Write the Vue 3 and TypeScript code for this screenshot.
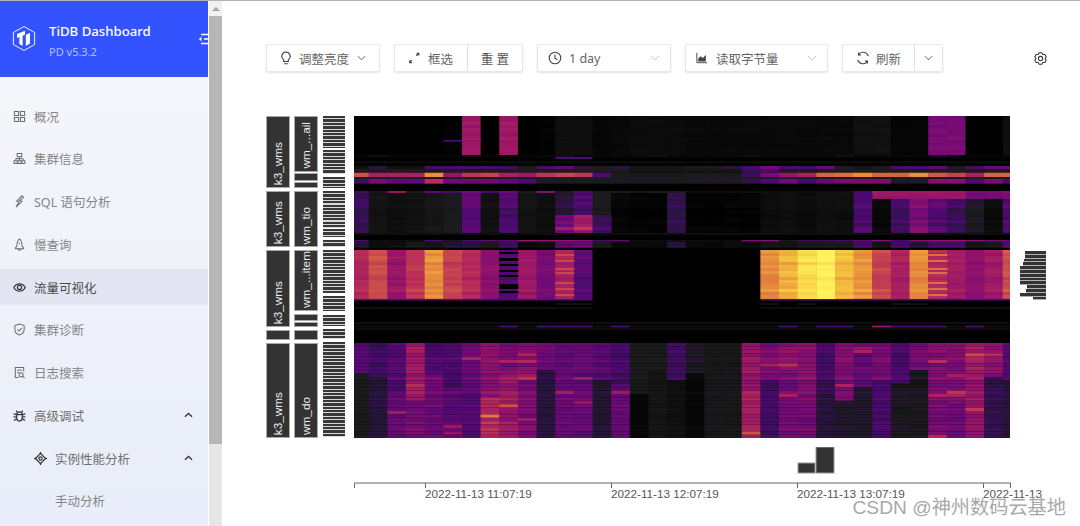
<script setup lang="ts">
import { onMounted, ref } from 'vue'

interface NavItem { label: string; icon: string[]; active?: boolean; sub?: boolean; leaf?: boolean; caret?: boolean }

const icons: Record<string, string[]> = {
  grid: ['M1.5 1.5h4.5v4.5H1.5z', 'M8 1.5h4.5v4.5H8z', 'M1.5 8h4.5v4.5H1.5z', 'M8 8h4.5v4.5H8z'],
  cluster: ['M4.5 1.5h5v3.5h-5z', 'M7 5v2', 'M3 7.2h8', 'M3 7.2v2', 'M7 7.2v2', 'M11 7.2v2', 'M1.2 9.5h3.4v3H1.2z', 'M5.3 9.5h3.4v3H5.3z', 'M9.4 9.5h3.4v3H9.4z'],
  bolt: ['M9.5 1 4 6.8l2.6.7L3.2 13l6.6-6.2-2.6-.8L11.5 2.5z'],
  rocket: ['M7 1C4.8 2.6 4.2 5 4.2 8.6L2.6 10.6v1h8.8v-1L9.8 8.6C9.8 5 9.2 2.6 7 1z', 'M5.5 11.6c0 1 .7 1.6 1.5 1.6s1.500-.6 1.500-1.600', 'M7 5v1.500'],
  eye: ['M.8 7C2.300 4.300 4.400 3 7 3s4.700 1.300 6.200 4C11.700 9.700 9.600 11 7 11S2.300 9.700.8 7z', 'M4.800 7a2.200 2.200 0 1 0 4.400 0a2.200 2.200 0 1 0-4.400 0z'],
  shield: ['M7 1 2 2.800v4.200c0 3 2.200 5 5 6 2.800-1 5-3 5-6V2.800z', 'M4.800 7 6.500 8.600 9.300 5.600'],
  log: ['M11.500 6V1.500h-9v11H6', 'M4.500 4.500h5', 'M4.500 7h2', 'M6.500 9.500a2.200 2.200 0 1 0 4.400 0a2.200 2.200 0 1 0-4.400 0z', 'M10.300 11 12.500 13'],
  bug: ['M4 6.500C4 4.500 5.200 3.200 7 3.200s3 1.300 3 3.300v3C10 11.500 8.800 13 7 13s-3-1.500-3-3.500z', 'M4.700 3.800 3.500 1.800', 'M9.300 3.800 10.500 1.800', 'M4 6h6', 'M.8 5l3.200 1.500', 'M13.200 5 10 6.500', 'M.6 8.500H4', 'M13.400 8.500H10', 'M1 12.500l3-2', 'M13 12.500l-3-2'],
  aim: ['M7 1.500 12.500 7 7 12.500 1.500 7z', 'M5.200 7a1.800 1.800 0 1 0 3.600 0a1.800 1.800 0 1 0-3.600 0z', 'M7 0v2.500', 'M7 11.500V14', 'M0 7h2.500', 'M11.500 7H14'],
}

const nav: NavItem[] = [
  { label: '概况', icon: icons.grid },
  { label: '集群信息', icon: icons.cluster },
  { label: 'SQL 语句分析', icon: icons.bolt },
  { label: '慢查询', icon: icons.rocket },
  { label: '流量可视化', icon: icons.eye, active: true },
  { label: '集群诊断', icon: icons.shield },
  { label: '日志搜索', icon: icons.log },
  { label: '高级调试', icon: icons.bug, caret: true },
  { label: '实例性能分析', icon: icons.aim, sub: true, caret: true },
  { label: '手动分析', icon: [], leaf: true },
]

// six-lobed settings cog, outlined
const gearPath = (() => {
  const pts: string[] = []
  for (let i = 0; i < 6; i++) {
    const a = (Math.PI / 3) * i - Math.PI / 2
    const p = (r: number, d: number) => {
      const t = a + d
      return `${(7 + r * Math.cos(t)).toFixed(2)} ${(7 + r * Math.sin(t)).toFixed(2)}`
    }
    pts.push(`${i ? 'L' : 'M'}${p(5, -0.5)}`, `L${p(6.4, -0.22)}`, `L${p(6.4, 0.22)}`, `L${p(5, 0.5)}`)
  }
  return pts.join(' ') + ' Z'
})()

interface Block { h: number; mt: number; text?: string }
const dbCol: Block[] = [
  { h: 72, mt: 0, text: 'k3_wms' }, { h: 56, mt: 3, text: 'k3_wms' }, { h: 77, mt: 3, text: 'k3_wms' },
  { h: 10, mt: 3 }, { h: 95, mt: 3, text: 'k3_wms' },
]
const tableCol: Block[] = [
  { h: 56, mt: 0, text: 'wm_...ail' }, { h: 8, mt: 1 }, { h: 6, mt: 1 }, { h: 56, mt: 3, text: 'wm_tio' },
  { h: 61, mt: 3, text: 'wm_...item' }, { h: 7, mt: 3 }, { h: 5, mt: 1 }, { h: 10, mt: 3 }, { h: 95, mt: 3, text: 'wm_do' },
]
const ladderCol: Block[] = [
  { h: 32, mt: 0 }, { h: 24, mt: 2 }, { h: 11, mt: 3 }, { h: 37, mt: 3 }, { h: 8, mt: 1 }, { h: 7, mt: 3 },
  { h: 43, mt: 3 }, { h: 15, mt: 3 }, { h: 11, mt: 4 }, { h: 10, mt: 3 }, { h: 95, mt: 3 },
]
const histogram = [21, 21, 22, 23, 26, 26, 26, 26, 26, 19, 20, 26, 13]
const ticks = [
  { x: 71, label: '2022-11-13 11:07:19' },
  { x: 257, label: '2022-11-13 12:07:19' },
  { x: 443, label: '2022-11-13 13:07:19' },
  { x: 629, label: '2022-11-13' },
]

const canvas = ref<HTMLCanvasElement | null>(null)

const stops: [number, number[]][] = [
  [0, [0, 0, 0]], [0.05, [14, 14, 14]], [0.1, [27, 26, 28]], [0.2, [40, 20, 62]], [0.3, [74, 10, 112]],
  [0.4, [112, 10, 118]], [0.5, [150, 20, 104]], [0.6, [184, 44, 88]], [0.7, [208, 90, 72]],
  [0.8, [232, 142, 60]], [0.9, [245, 200, 64]], [1, [255, 242, 92]],
]
function colour(v: number): string {
  const t = Math.max(0, Math.min(1, v))
  for (let i = 1; i < stops.length; i++) {
    if (t <= stops[i][0]) {
      const [a, ca] = stops[i - 1]
      const [b, cb] = stops[i]
      const k = (t - a) / (b - a)
      return `rgb(${ca.map((c, j) => Math.round(c + (cb[j] - c) * k)).join(',')})`
    }
  }
  return 'rgb(255,242,92)'
}

let seed = 7
function rnd(): number {
  seed = (seed * 16807) % 2147483647
  return seed / 2147483647
}

function draw(ctx: CanvasRenderingContext2D) {
  const Y0 = 116
  const colX = (c: number) => (c === 0 ? 0 : 14.7 + (c - 1) * 18.65)
  const band = (y0: number, y1: number, vals: number[], amp = 0, rowH = 3) => {
    for (let y = y0; y < y1; y += rowH) {
      const rowNoise = (rnd() - 0.5) * amp
      vals.forEach((v, c) => {
        if (v < 0) return
        const jitter = rowNoise + (rnd() - 0.5) * amp * 0.9
        const k = v < 0.12 ? 0.2 : 1
        ctx.fillStyle = colour(v === 0 ? 0 : v + jitter * k)
        ctx.fillRect(colX(c), y - Y0, colX(c + 1) - colX(c) + 0.5, Math.min(rowH, y1 - y))
      })
    }
  }
  const fill = (v: number) => new Array(36).fill(v) as number[]
  const only = (m: Record<number, number>) => fill(-1).map((_, i) => (i in m ? m[i] : -1))

  ctx.fillStyle = '#000'
  ctx.fillRect(0, 0, 656, 322)

  band(116, 155, [0, 0, 0, 0, 0, .01, .52, 0, .52, 0, .01, .05, .05, .02, .03, .04, .04, .04, .03, .03, .03, .03, .03, .03, .03, .03, .03, .06, .06, .02, .02, .42, .42, 0, 0, .05], .04, 3)
  band(140, 141.6, only({ 5: .32, 6: .5 }))
  band(155, 157, fill(.03).map((v, i) => (i % 5 === 1 ? .06 : v)))
  band(157, 159, fill(0).map((_, i) => (i === 11 || i === 12 ? .3 : .01)))
  band(161, 163, fill(.04))
  band(163, 166, fill(.01))
  band(166, 169, [.06, .2, .06, .06, .3, .3, .3, .3, .28, .1, .3, .35, .2, .12, .2, .08, .08, .08, .1, .1, .2, .3, .42, .3, .28, .38, .12, .08, .1, .3, .3, .35, .12, .28, .38, .38])
  band(169, 172.7, [.1, .12, .1, .1, .12, .12, .12, .1, .1, .1, .12, .12, .12, .1, .1, .08, .08, .08, .08, .08, .08, .25, .3, .1, .1, .1, .1, .1, .1, .1, .1, .1, .1, .1, .1, .1])
  band(172.7, 177, [.68, .55, .55, .56, .8, .5, .62, .65, .55, .52, .62, .66, .62, .3, .1, .09, .09, .09, .1, .1, .1, .25, .42, .5, .55, .72, .74, .8, .72, .72, .8, .7, .65, .55, .72, .72], 0, 5)
  band(177, 179, fill(.12))
  band(179, 183.7, [.25, .42, .35, .35, .6, .4, .38, .4, .36, .3, .12, .1, .1, .1, .1, .1, .1, .1, .1, .12, .12, .22, .3, .4, .28, .38, .42, .42, .42, .12, .12, .45, .45, .3, .42, .3], 0, 5)
  // wm_tio group
  band(191, 193, [.25, .08, .5, .1, .35, .3, .42, .3, .4, .1, .45, .1, .3, .1, .1, .08, .1, .12, .05, .05, .05, .06, .06, .06, .06, .06, .06, .28, .52, .52, .52, .52, .52, .42, .42, .45])
  band(193, 233, [.24, .07, .05, .06, .08, .1, .34, .06, .3, .07, .05, .18, .3, .1, .02, .01, .01, .22, .01, .01, .01, .01, .04, .05, .04, .05, .05, .3, .03, .26, .42, .32, .26, .12, .04, .3], .07, 3)
  band(193, 199, only({ 28: .52, 29: .52, 30: .52, 31: .52, 32: .52, 33: .42, 34: .42, 35: .45 }), .04, 3)
  band(215, 233, only({ 11: .46, 12: .56, 13: .3 }), .12, 3)
  band(233, 235, fill(.05))
  band(240, 241.7, [.3, .05, .05, .05, .3, .1, .3, .35, .35, .5, .5, .5, .45, .3, .35, .05, .05, .05, .05, .05, .05, .42, .45, .1, .28, .28, .3, .38, .45, .3, .45, .5, .5, .45, .42, .4])
  band(241.7, 248, [.2, .05, .06, .1, .08, .2, .22, .1, .3, .04, .05, .36, .4, .1, .04, .04, .04, .22, .03, .03, .05, .04, .08, .08, .1, .1, .1, .3, .08, .3, .2, .3, .3, .08, .1, .34], .04, 3)
  // bright group
  band(250, 300, [.58, .67, .5, .62, .8, .65, .58, .47, .32, .52, .42, .56, .34, 0, 0, 0, 0, 0, 0, 0, 0, 0, .79, .86, .95, 1, .88, .81, .65, .55, .79, .58, .53, .47, .52, .68], .05, 3)
  for (const [a, b] of [[252, 254], [258, 261], [264, 266], [270, 272], [275, 277], [284, 289], [291, 293]]) {
    band(a, b, only({ 8: 0 }), 0, 5)
  }
  for (const [a, b] of [[254, 256], [260, 262], [268, 270], [272, 274], [282, 284], [288, 290], [294, 296]]) {
    band(a, b, only({ 11: .66, 31: .74 }), 0, 5)
  }
  band(299, 300.5, fill(0).map((_, i) => (i < 13 || i > 21 ? .34 : 0)), 0, 3)
  // quiet group
  band(303, 305, fill(0).map((_, i) => ([11, 12, 22, 24, 29, 30].includes(i) ? .05 : 0)))
  band(307, 309, fill(.05).map((v, i) => (i > 12 && i < 22 ? .01 : v)))
  band(322, 324, fill(.05))
  band(325.5, 327.5, fill(.05).map((_, i) => ([8, 10, 11, 12, 14, 23, 25, 26, 28, 29, 30, 31, 33].includes(i) ? (i === 28 ? .5 : .3) : .05)))
  band(328, 330, fill(.04))
  // bottom group: every column turns from its upper to its lower level at its own height
  const upper = [.33, .27, .33, .52, .31, .3, .38, .48, .43, .44, .4, .36, .37, .33, .28, .1, .1, .27, .12, .09, .09, .5, .42, .46, .46, .28, .44, .38, .42, .3, .42, .44, .44, .52, .48, .33]
  const lower = [.1, .2, .38, .42, .4, .36, .34, .6, .52, .43, .2, .38, .38, .18, .38, .03, .08, .06, .03, .09, .09, .55, .28, .42, .42, .2, .15, .15, .3, .13, .12, .42, .4, .5, .24, .2]
  const cut = upper.map(() => 368 + rnd() * 34)
  for (let y = 343; y < 438; y += 3.4) {
    const rowNoise = (rnd() - 0.5) * 0.07
    upper.forEach((u, c) => {
      const base = y < cut[c] ? u : lower[c]
      const flare = base > 0.35 && rnd() < 0.07 ? 0.14 : 0
      const k = base < 0.12 ? 0.15 : 1
      ctx.fillStyle = colour(base + flare + (rowNoise + (rnd() - 0.5) * 0.06) * k)
      ctx.fillRect(colX(c), y - Y0, colX(c + 1) - colX(c) + 0.5, 3.4)
    })
  }
}

onMounted(() => {
  const ctx = canvas.value?.getContext('2d')
  if (ctx) draw(ctx)
})
</script>

<template>
  <div class="page">
    <aside class="sidebar">
      <header class="brand">
        <svg class="logo" viewBox="0 0 26 28" width="24" height="27">
          <path class="logo-hex" d="M13 1 24.500 7.500v13L13 27 1.500 20.500v-13z" />
          <path class="logo-mark" d="M5.500 9 14 5.500v4.500l-2.500 1V22L8 20v-7.500L5.500 13.500z" />
          <path class="logo-mark" d="M15 10l4.500-2v11.500L15 22z" />
        </svg>
        <div class="brand-text">
          <div class="brand-name">TiDB Dashboard</div>
          <div class="brand-version">PD v5.3.2</div>
        </div>
        <svg class="collapse" viewBox="0 0 14 12" width="14" height="12">
          <path d="M3 1.500h11M6 6h8M3 10.500h11" />
          <path class="collapse-tip" d="M3.500 3.800 0.800 6l2.700 2.200z" />
        </svg>
      </header>
      <nav class="menu">
        <div
          v-for="item in nav"
          :key="item.label"
          class="menu-item"
          :class="{ active: item.active, sub: item.sub, leaf: item.leaf, strong: item.caret }"
        >
          <svg v-if="item.icon.length" class="menu-icon" viewBox="0 0 14 14" width="13" height="13">
            <path v-for="d in item.icon" :key="d" :d="d" />
          </svg>
          <span class="menu-label">{{ item.label }}</span>
          <svg v-if="item.caret" class="caret" viewBox="0 0 10 6" width="9" height="6">
            <path d="M1 5 5 1.300 9 5" />
          </svg>
        </div>
      </nav>
    </aside>

    <div class="scrollbar">
      <div class="scroll-up"><i></i></div>
      <div class="scroll-thumb"></div>
    </div>

    <main class="main">
      <div class="toolbar">
        <button class="btn w-bright">
          <svg class="ico" viewBox="0 0 14 14" width="14" height="14"><path d="M7 1a4.200 4.200 0 0 0-2.300 7.700V10.500h4.600V8.700A4.200 4.200 0 0 0 7 1zM5.200 12.800h3.600" /></svg>
          <span>调整亮度</span>
          <svg class="chev" viewBox="0 0 10 6" width="9" height="6"><path d="M1 1l4 4 4-4" /></svg>
        </button>
        <div class="group">
          <button class="btn seg w-select">
            <svg class="ico thick" viewBox="0 0 14 14" width="12" height="12"><path d="M1.500 12.500 4.500 9.500M9.500 4.500 12.500 1.500M2 10v2.500h2.500M10 1.500h2.500V4" /></svg>
            <span>框选</span>
          </button>
          <button class="btn seg w-reset"><span class="spaced">重 置</span></button>
        </div>
        <button class="btn w-range">
          <svg class="ico" viewBox="0 0 14 14" width="14" height="14"><circle cx="7" cy="7" r="5.800" /><path d="M7 3.500V7.300l2.500 1.500" /></svg>
          <span>1 day</span>
          <svg class="chev pale push" viewBox="0 0 10 6" width="10" height="6"><path d="M1 1l4 4 4-4" /></svg>
        </button>
        <button class="btn w-metric">
          <svg class="ico" viewBox="0 0 14 14" width="12" height="12"><path d="M1 1v11.500h12" /><path class="solid" d="M2.500 11V8l3-3 2.500 2 3.500-3.500V11z" /></svg>
          <span class="metric-label">读取字节量</span>
          <svg class="chev pale push" viewBox="0 0 10 6" width="10" height="6"><path d="M1 1l4 4 4-4" /></svg>
        </button>
        <div class="group">
          <button class="btn seg w-refresh">
            <svg class="ico" viewBox="0 0 14 14" width="14" height="14"><path d="M12.300 5A5.600 5.600 0 0 0 2.500 3.500M1.700 9a5.600 5.600 0 0 0 9.800 1.500" /><path class="solid" d="M2 1v3.500h3.500zM12 13V9.500H8.500z" /></svg>
            <span>刷新</span>
          </button>
          <button class="btn seg w-more">
            <svg class="chev" viewBox="0 0 10 6" width="9" height="6"><path d="M1 1l4 4 4-4" /></svg>
          </button>
        </div>
        <svg class="gear" viewBox="0 0 14 14" width="13" height="13">
          <path :d="gearPath" />
          <circle cx="7" cy="7" r="2.300" />
        </svg>
      </div>

      <section class="heat-row">
        <div class="col col-db">
          <div v-for="(b, i) in dbCol" :key="i" class="tag" :style="{ height: b.h + 'px', marginTop: b.mt + 'px' }">
            <span v-if="b.text">{{ b.text }}</span>
          </div>
        </div>
        <div class="col col-table">
          <div v-for="(b, i) in tableCol" :key="i" class="tag" :style="{ height: b.h + 'px', marginTop: b.mt + 'px' }">
            <span v-if="b.text">{{ b.text }}</span>
          </div>
        </div>
        <div class="col col-ladder">
          <div v-for="(b, i) in ladderCol" :key="i" class="ladder" :style="{ height: b.h + 'px', marginTop: b.mt + 'px' }"></div>
        </div>
        <div class="canvas-wrap">
          <canvas ref="canvas" class="heat" width="656" height="322"></canvas>
        </div>
        <div class="hist">
          <div v-for="(w, i) in histogram" :key="i" class="hist-bar" :style="{ width: w + 'px' }"></div>
        </div>
      </section>

      <svg class="timeline" width="714" height="66" viewBox="0 0 714 66">
        <rect class="bar" x="444" y="16" width="17" height="10" />
        <rect class="bar" x="462" y="0" width="18" height="26" />
        <path class="axis" d="M0.500 41V36H656.500V41" />
        <path v-for="t in ticks" :key="t.x" class="axis" :d="`M${t.x + 0.5} 36v5`" />
        <text v-for="t in ticks" :key="t.label" class="tick" :x="t.x" y="51">{{ t.label }}</text>
      </svg>
    </main>
    <div class="watermark">CSDN @神州数码云基地</div>
  </div>
</template>

<style>
html, body { margin: 0; height: 526px; overflow: hidden; background: #fff; }
</style>

<style scoped>
.page {
  position: relative;
  display: flex;
  width: 1080px;
  height: 525px;
  border-top: 1px solid #b4b4b4;
  font-family: "Noto Sans", "Noto Sans CJK SC", sans-serif;
  overflow: hidden;
}
.sidebar {
  width: 208px;
  flex: none;
  overflow: hidden;
  background: linear-gradient(180deg, #f7f8fc 0%, #e9edf9 100%);
}
.brand {
  height: 76px;
  display: flex;
  align-items: center;
  padding-left: 12px;
  background: #3353ff;
  color: #fff;
  box-sizing: border-box;
  position: relative;
}
.logo { flex: none; margin-top: -1px; }
.logo-hex { fill: none; stroke: #fff; stroke-width: 1; }
.logo-mark { fill: #fff; }
.brand-text { margin-left: 13px; margin-top: 5px; }
.brand-name { font-size: 13.200px; line-height: 20px; color: #fff; font-weight: 500; white-space: nowrap; }
.brand-version { font-size: 11px; line-height: 22px; color: #b3c0ff; }
.collapse { position: absolute; left: 198px; top: 32px; fill: none; stroke: #fff; stroke-width: 1.400; }
.collapse-tip { fill: #fff; stroke: none; }

.menu { padding-top: 21px; display: flex; flex-direction: column; gap: 6.780px; }
.menu-item {
  height: 36px;
  display: flex;
  align-items: center;
  padding-left: 13px;
  padding-right: 15px;
  font-size: 12.500px;
  color: #858585;
}
.menu-item.active { background: #e3e6f2; color: #4a4a4a; }
.menu-item.strong { color: #6e6e6e; }
.menu-item.sub { padding-left: 34px; }
.menu-item.leaf { padding-left: 55px; }
.menu-icon { flex: none; margin-right: 8px; fill: none; stroke: #6a6a6a; stroke-width: 1.100; }
.active .menu-icon, .strong .menu-icon { stroke: #333; stroke-width: 1.300; }
.menu-label { white-space: nowrap; flex: 1; }
.caret { flex: none; fill: none; stroke: #333; stroke-width: 1.400; }

.scrollbar {
  width: 13px;
  margin-left: 1px;
  flex: none;
  background: #e6e6e6;
  display: flex;
  flex-direction: column;
}
.scroll-up { height: 15px; background: #f1f1f1; display: flex; justify-content: center; padding-top: 6px; box-sizing: border-box; }
.scroll-up i { width: 0; height: 0; border: 4px solid transparent; border-top: 0; border-bottom: 4px solid #a3a3a3; }
.scroll-thumb { height: 428px; background: #b6b6b6; }

.main {
  flex: 1;
  min-width: 0;
  padding: 43px 32px 0 44px;
  box-sizing: border-box;
}
.toolbar { display: flex; align-items: center; gap: 14px; height: 28px; }
.group { display: flex; box-shadow: 0 1px 2px rgba(0, 0, 0, .12); border-radius: 2px; }
.btn {
  height: 28px;
  display: flex;
  align-items: center;
  gap: 7px;
  padding: 0 12px;
  box-sizing: border-box;
  background: #fff;
  border: 1px solid #e8e8e8;
  border-radius: 2px;
  box-shadow: 0 1px 2px rgba(0, 0, 0, .12);
  font: inherit;
  font-size: 12.500px;
  color: #666;
  white-space: nowrap;
}
.btn.seg { box-shadow: none; }
.seg + .seg { margin-left: -1px; border-left-color: #dedede; }
.w-bright { width: 114px; gap: 6px; }
.w-bright .chev { margin-left: 2px; }
.w-select { width: 74px; gap: 8px; padding-left: 13px; }
.w-reset { width: 56px; justify-content: center; padding: 0; }
.spaced { color: #555; }
.w-range { width: 134px; padding: 0 10px; }
.w-metric { width: 143px; padding: 0 10px; gap: 8px; }
.metric-label { font-size: 12.500px; }
.w-refresh { width: 73px; gap: 6px; padding: 0 13px; }
.w-more { width: 29px; justify-content: center; padding: 0; }
.ico { flex: none; fill: none; stroke: #444; stroke-width: 1.100; }
.ico.thick { stroke-width: 1.500; }
.ico .solid { fill: #444; stroke: none; }
.chev { flex: none; fill: none; stroke: #555; stroke-width: 1; }
.chev.pale { stroke: #c8c8c8; }
.push { margin-left: auto; }
.gear { margin-left: auto; margin-right: 1px; fill: none; stroke: #333; stroke-width: 1.100; }

.heat-row { display: flex; margin-top: 44px; height: 322px; }
.col { display: flex; flex-direction: column; flex: none; }
.col-db { width: 24px; }
.col-table { width: 24px; margin-left: 4px; }
.col-ladder { width: 22px; margin-left: 5px; }
.tag {
  box-sizing: border-box;
  background: #333;
  border: 1px solid #a8a8a8;
  display: flex;
  align-items: flex-end;
  justify-content: center;
  overflow: hidden;
  color: #eee;
  font-family: "Liberation Sans", sans-serif;
  font-size: 11.800px;
}
.tag span {
  writing-mode: vertical-rl;
  transform: rotate(180deg);
  white-space: nowrap;
  padding-top: 2px;
  line-height: 22px;
}
.ladder {
  background: repeating-linear-gradient(180deg, #383838 0, #383838 2.300px, #d8d8d8 2.300px, #d8d8d8 3.400px);
}
.canvas-wrap { width: 656px; height: 322px; margin-left: 9px; overflow: hidden; flex: none; background: #000; }
.heat { display: block; filter: blur(.45px); }
.hist {
  flex: none;
  width: 26px;
  margin-left: 10px;
  margin-top: 135px;
  display: flex;
  flex-direction: column;
  align-items: flex-end;
  align-self: flex-start;
}
.hist-bar { height: 2.800px; background: #333; border-bottom: 1px solid #b0b0b0; }

.timeline { display: block; margin: 9px 0 0 88px; }
.bar { fill: #333; stroke: #999; stroke-width: 1; }
.axis { fill: none; stroke: #666; stroke-width: 1; }
.tick { font-family: "Liberation Sans", sans-serif; font-size: 11.700px; fill: #555; }

.watermark {
  position: absolute;
  right: 14px;
  bottom: 5px;
  font-family: "Liberation Sans", "Noto Sans CJK SC", sans-serif;
  font-size: 19.200px;
  line-height: 26px;
  color: #a8a8a8;
  text-shadow: 0 0 2px #fff;
  white-space: nowrap;
}
</style>
